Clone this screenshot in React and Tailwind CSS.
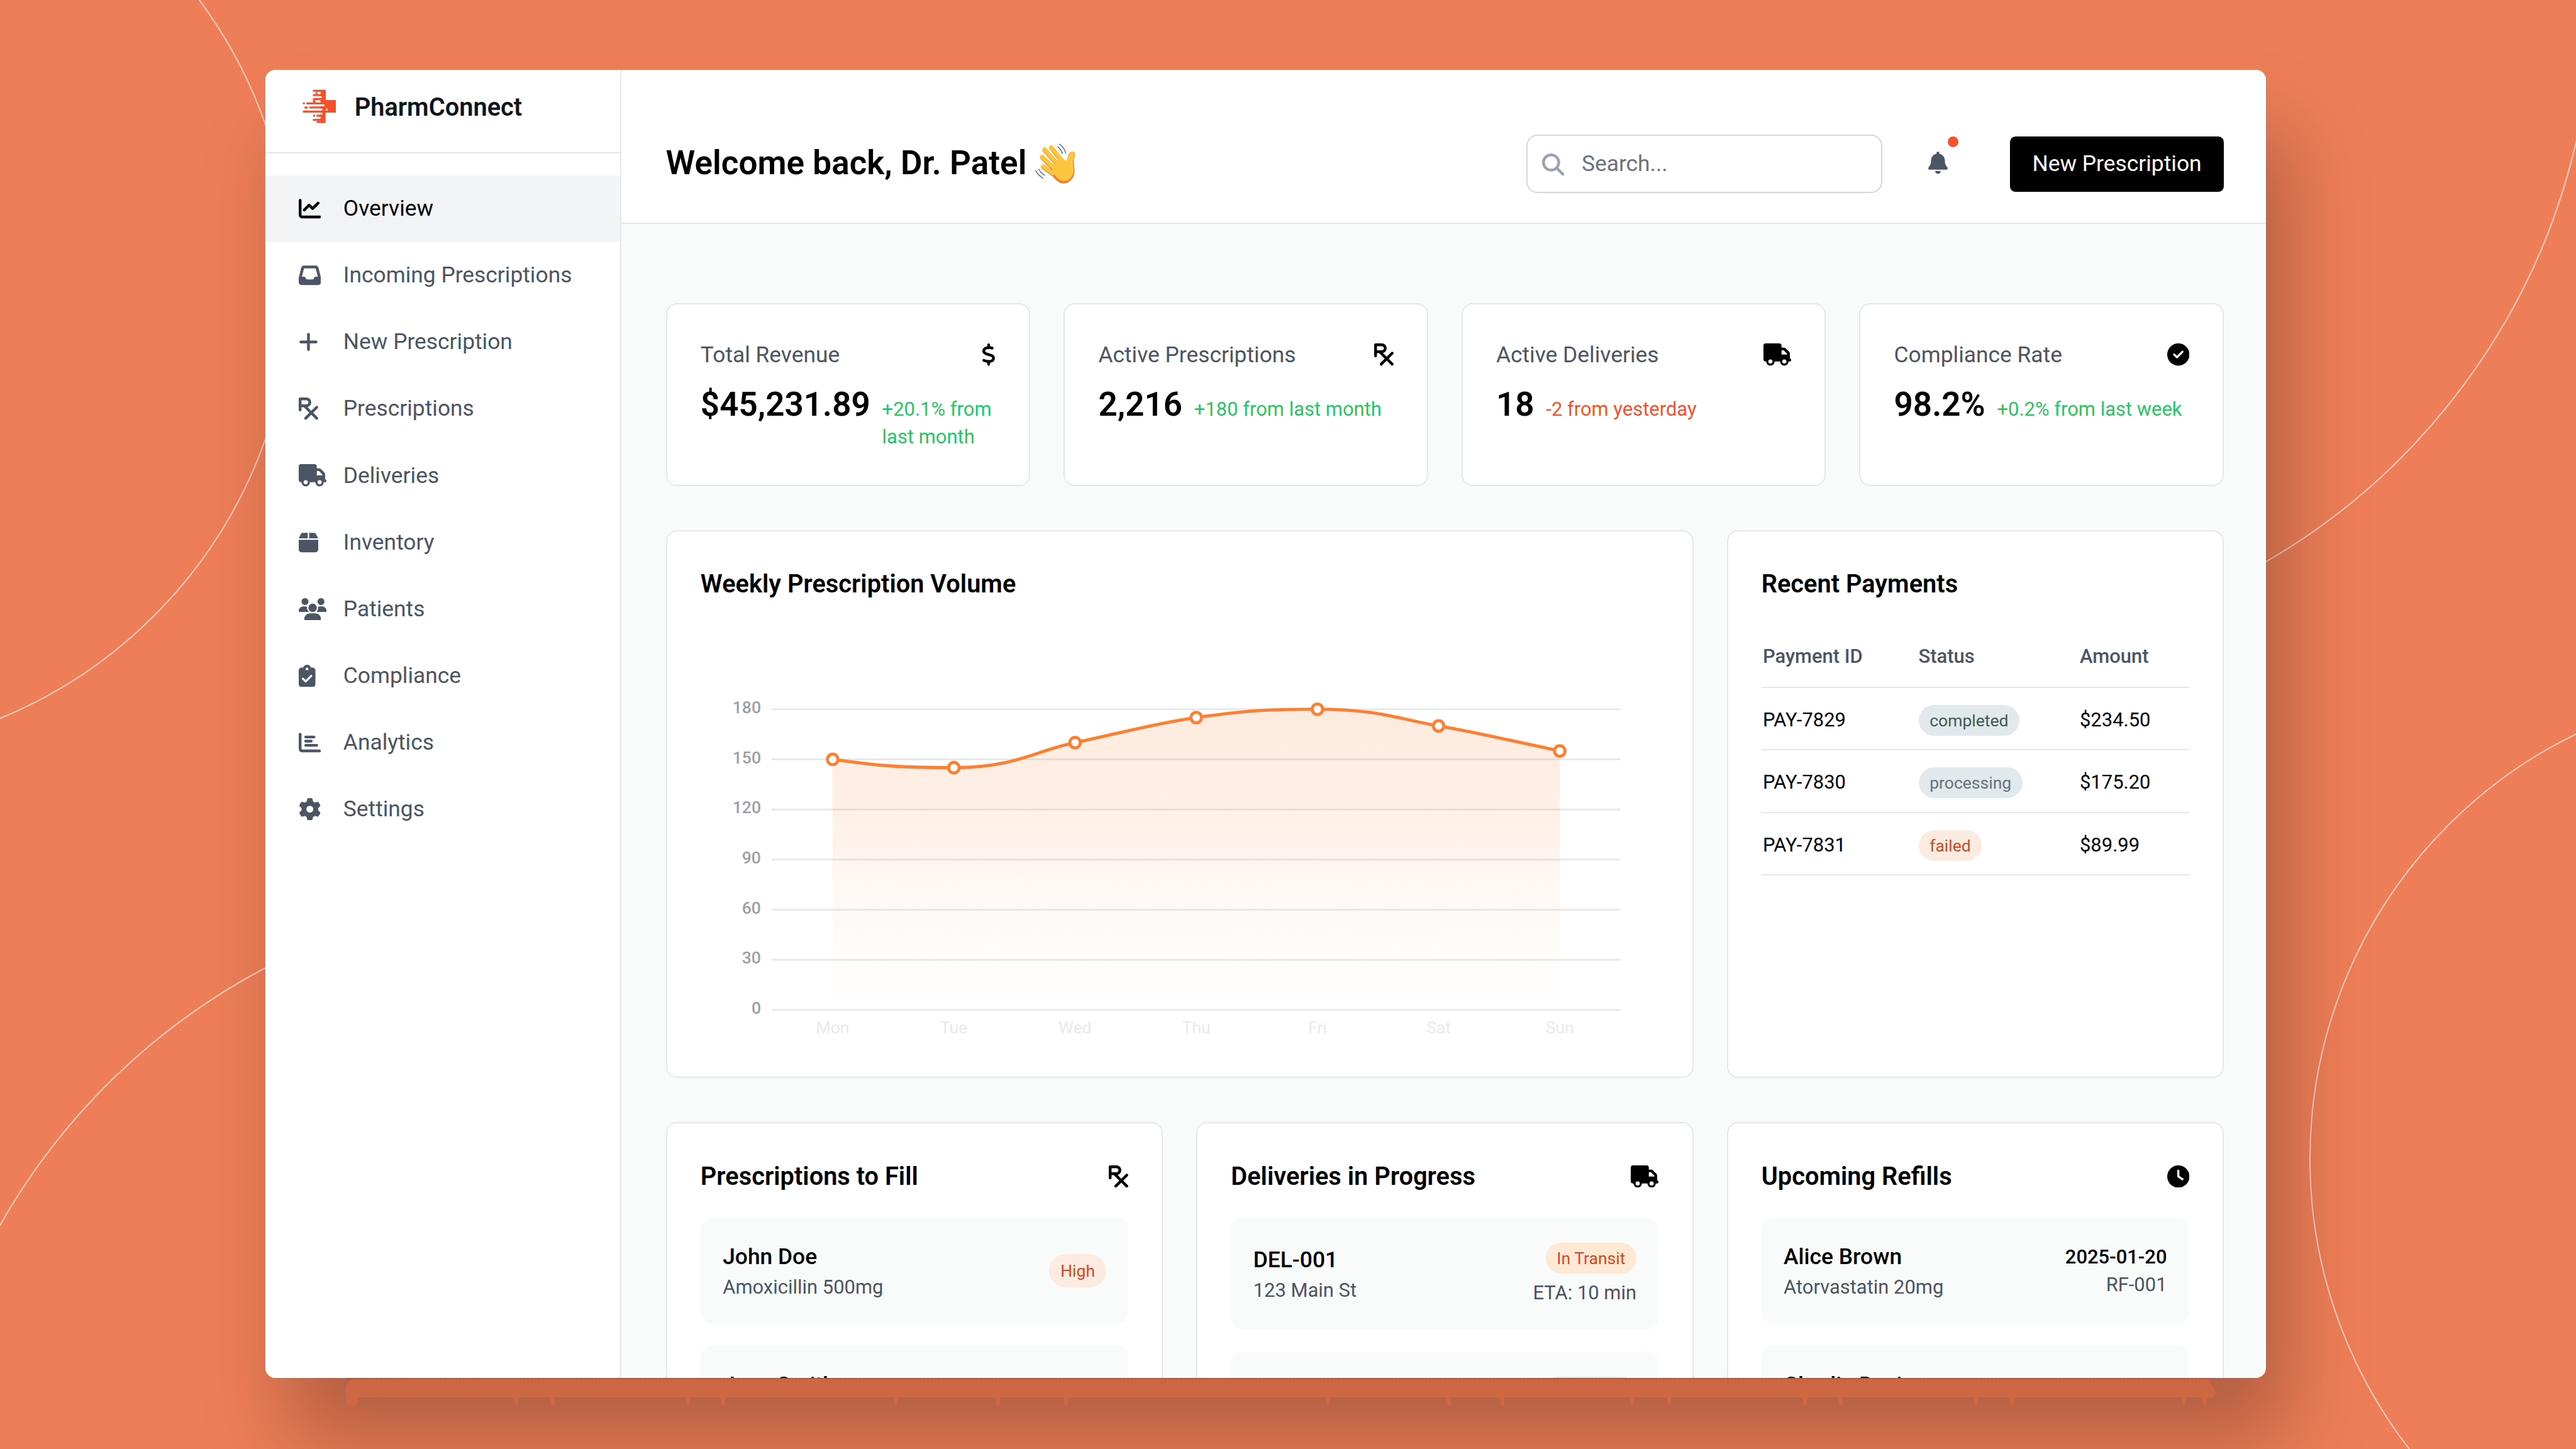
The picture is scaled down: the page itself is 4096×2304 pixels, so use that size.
import React from 'react';
import {
  FaBell,
  FaBox,
  FaChartBar,
  FaChartLine,
  FaCircleCheck,
  FaClipboardCheck,
  FaClock,
  FaDollarSign,
  FaGear,
  FaInbox,
  FaMagnifyingGlass,
  FaPlus,
  FaPrescription,
  FaTruck,
  FaUsers,
} from 'react-icons/fa6';

const navItems = [
  { label: 'Overview', icon: FaChartLine, size: 'w-4', active: true },
  { label: 'Incoming Prescriptions', icon: FaInbox, size: 'w-4' },
  { label: 'New Prescription', icon: FaPlus, size: 'w-3.5' },
  { label: 'Prescriptions', icon: FaPrescription, size: 'w-3.5' },
  { label: 'Deliveries', icon: FaTruck, size: 'w-5' },
  { label: 'Inventory', icon: FaBox, size: 'w-3.5' },
  { label: 'Patients', icon: FaUsers, size: 'w-5' },
  { label: 'Compliance', icon: FaClipboardCheck, size: 'w-3' },
  { label: 'Analytics', icon: FaChartBar, size: 'w-4' },
  { label: 'Settings', icon: FaGear, size: 'w-4' },
];

const stats = [
  { label: 'Total Revenue', value: '$45,231.89', change: '+20.1% from last month', icon: FaDollarSign, size: 'w-2.5', up: true },
  { label: 'Active Prescriptions', value: '2,216', change: '+180 from last month', icon: FaPrescription, size: 'w-3.5', up: true },
  { label: 'Active Deliveries', value: '18', change: '-2 from yesterday', icon: FaTruck, size: 'w-5', up: false },
  { label: 'Compliance Rate', value: '98.2%', change: '+0.2% from last week', icon: FaCircleCheck, size: 'w-4', up: true },
];

const payments = [
  { id: 'PAY-7829', status: 'completed', amount: '$234.50', badge: 'bg-[#e2e9ec] text-[#3f5a55]' },
  { id: 'PAY-7830', status: 'processing', amount: '$175.20', badge: 'bg-[#e2e9ec] text-[#66707d]' },
  { id: 'PAY-7831', status: 'failed', amount: '$89.99', badge: 'bg-[#fcebe0] text-[#cf4a22]' },
];

const toFill = [
  { name: 'John Doe', drug: 'Amoxicillin 500mg', priority: 'High' },
  { name: 'Jane Smith', drug: 'Lisinopril 10mg', priority: 'Medium' },
];

const deliveries = [
  { id: 'DEL-001', address: '123 Main St', status: 'In Transit', eta: '10 min', badge: 'bg-[#ffe9d5] text-[#cf4a22]' },
  { id: 'DEL-002', address: '456 Oak Ave', status: 'Preparing', eta: '25 min', badge: 'bg-[#e2e9ec] text-[#66707d]' },
];

const refills = [
  { name: 'Alice Brown', drug: 'Atorvastatin 20mg', date: '2025-01-20', id: 'RF-001' },
  { name: 'Charlie Davis', drug: 'Metformin 500mg', date: '2025-01-21', id: 'RF-002' },
];

const volume = [
  { day: 'Mon', value: 150 },
  { day: 'Tue', value: 145 },
  { day: 'Wed', value: 160 },
  { day: 'Thu', value: 175 },
  { day: 'Fri', value: 180 },
  { day: 'Sat', value: 170 },
  { day: 'Sun', value: 155 },
];

function Logo() {
  // horizontal strokes that make up the left half of the cross
  const rows = [
    [75, 27, 120], [75, 79, 80], [43, 89, 120], [26, 89, 27], [34, 109, 42],
    [57, 109, 120], [26, 129, 120], [76, 149, 77], [92, 149, 120],
    [75, 169, 120], [93, 179, 120], [75, 68, 120], [75, 48, 120], [88, 38, 89],
  ];
  return (
    <svg viewBox="20 20 165 167" className="h-[24.6px] w-[24.3px] shrink-0">
      <path fill="#f4512c" d="M108 22h26v50h49v62h-50v51h-25z" />
      {rows.map(([x1, y, x2]) => (
        <path key={`${x1}-${y}`} d={`M${x1} ${y}H${x2}`} stroke="#f4512c" strokeWidth="10" strokeLinecap="round" />
      ))}
      <g stroke="#fff" strokeWidth="9" strokeLinecap="round">
        <path d="M98 38h5M78 58h32M94 78h1M64 98h18M96 98h27M56 119h57M138 119h1M80 139h18M113 139h1M78 159h19" />
      </g>
    </svg>
  );
}

function WavingHand() {
  return (
    <svg viewBox="50 50 193 193" className="ml-[6.2px] h-[29px] w-[29px] shrink-0" role="img" aria-label="waving hand">
      <g fill="none" strokeLinecap="round" stroke="#f0812c" strokeWidth="22">
        <path d="M89 163l45 32M85 118l55 54M96 82l58 65M128 72l52 64" />
      </g>
      <path
        fill="#f5802a"
        d="M120 160l55-40 22 14c8-4 8-16 11-27 3-12 14-19 24-17 9 2 11 10 9 17-5 15-9 30-5 48 3 18 5 36-3 54-9 20-29 35-51 33-18-2-34-16-48-33z"
      />
      <g fill="none" strokeLinecap="round" stroke="#fbc63f" strokeWidth="20">
        <path d="M88 160l46 32M83 114l60 56M95 79l60 66M127 69l54 66" />
      </g>
      <path
        fill="#fbc63f"
        d="M124 160l50-42 22 17c9-3 10-15 13-26 3-12 13-19 22-18 8 1 10 9 8 16-5 15-11 30-7 48 3 17 4 32-4 48-9 19-26 30-45 27-17-3-32-18-45-36z"
      />
      <g fill="none" stroke="#f0812c" strokeWidth="2.5" strokeLinecap="round" opacity="0.75">
        <path d="M98 146l36 30M104 108l40 42M137 92l24 36" />
      </g>
      <g fill="none" stroke="#6d7580" strokeWidth="5" strokeLinecap="round">
        <path d="M167 54c14 9 23 23 29 41M158 66c11 8 18 18 22 32M53 180c7 15 18 27 34 36M68 174c6 12 14 21 27 28" />
      </g>
    </svg>
  );
}

function Sidebar() {
  return (
    <aside className="w-64 shrink-0 border-r border-[#e2e8ec] bg-white">
      <div className="flex h-[60px] items-start border-b border-[#e2e8ec] pl-[26.6px] pt-[13.9px]">
        <Logo />
        <span className="ml-[13.2px] mt-[-0.8px] text-lg font-semibold leading-7 text-[#111418]">PharmConnect</span>
      </div>
      <nav className="mt-[15.8px]">
        {navItems.map(({ label, icon: Icon, size, active }) => (
          <a
            key={label}
            className={`flex h-12 items-center px-6 ${active ? 'bg-[#f3f4f6] text-black' : 'text-[#4b5563]'}`}
          >
            <span className="mr-3 flex w-5 shrink-0">
              <Icon className={`h-4 ${size}`} />
            </span>
            {label}
          </a>
        ))}
      </nav>
    </aside>
  );
}

function Header() {
  return (
    <header className="flex h-[110.6px] shrink-0 items-start justify-between border-b border-[#e2e8ec] bg-white pl-8 pr-[31.6px] pt-[46.8px]">
      <h1 className="flex h-[41px] items-center text-2xl font-semibold text-black">
        Welcome back, Dr. Patel
        <WavingHand />
      </h1>
      <div className="flex items-center">
        <div className="relative">
          <div className="flex h-[42px] w-64 items-center rounded-lg border border-[#d1d9dd] pl-[39px] text-[#6b7280]">
            Search...
          </div>
          <FaMagnifyingGlass className="absolute left-[11.4px] top-[13.4px] size-4 text-[#9ca3af]" />
        </div>
        <button className="relative ml-[25px] flex h-10 items-center p-2 pb-[9.6px] text-[#4b5563]">
          <FaBell className="h-4 w-3.5" />
          <span className="absolute right-0 top-0 size-2 rounded-full bg-[#f4512c]" />
        </button>
        <button className="ml-[37px] h-10 rounded bg-black px-4 text-white">New Prescription</button>
      </div>
    </header>
  );
}

function StatCard({ label, value, change, icon: Icon, size, up }) {
  return (
    <div className="rounded-lg border border-[#e2e8ec] bg-white p-6">
      <div className="flex items-center justify-between">
        <span className="text-[#4b5563]">{label}</span>
        <Icon className={`h-4 text-black ${size}`} />
      </div>
      <div className="mt-2 flex items-baseline">
        <span className="text-2xl font-semibold text-black">{value}</span>
        <span className={`ml-[8.5px] text-sm ${up ? 'text-[#2ac466]' : 'text-[#f4512c]'}`}>{change}</span>
      </div>
    </div>
  );
}

function VolumeChart() {
  const x0 = 95;
  const step = 87.15;
  const yOf = (v) => 277.2 - v * 1.2015;
  const pts = volume.map((d, i) => [x0 + i * step, yOf(d.value)]);

  // smooth curve, flat at the local extremes
  const slopes = pts.slice(1).map((p, i) => (p[1] - pts[i][1]) / step);
  const tangents = pts.map((_, i) => {
    if (i === 0) return slopes[0] * 2;
    if (i === pts.length - 1) return slopes[i - 1];
    const a = slopes[i - 1];
    const b = slopes[i];
    return a * b <= 0 ? 0 : (a + b) / 2;
  });
  const handle = (i) => (tangents[i] === 0 ? step * 0.5 : step / 3);
  const line = pts.reduce((d, [x, y], i) => {
    if (i === 0) return `M${x} ${y}`;
    const [px, py] = pts[i - 1];
    const k1 = handle(i - 1);
    const k2 = handle(i);
    return `${d}C${px + k1} ${py + tangents[i - 1] * k1} ${x - k2} ${y - tangents[i] * k2} ${x} ${y}`;
  }, '');
  const area = `${line}V${yOf(0)}H${x0}Z`;

  return (
    <svg viewBox="0 0 688 300" className="mt-[14.7px] block h-[300px] w-[688px]">
      <defs>
        <linearGradient id="volumeFill" x1="0" y1="0" x2="0" y2="1">
          <stop offset="0" stopColor="#f98135" stopOpacity="0.16" />
          <stop offset="0.3" stopColor="#f98135" stopOpacity="0.13" />
          <stop offset="0.6" stopColor="#f98135" stopOpacity="0.055" />
          <stop offset="1" stopColor="#f98135" stopOpacity="0" />
        </linearGradient>
      </defs>
      {[180, 150, 120, 90, 60, 30, 0].map((v) => (
        <g key={v}>
          <path d={`M51 ${yOf(v)}H661.6`} stroke="#e5e8eb" strokeWidth="1.2" />
          <text x="43.4" y={yOf(v) + 2.8} textAnchor="end" fontSize="12" fontWeight="500" fill="#9b9fa8">
            {v}
          </text>
        </g>
      ))}
      <path d={area} fill="url(#volumeFill)" />
      <path d={line} fill="none" stroke="#f98135" strokeWidth="2.3" />
      {pts.map(([x, y], i) => (
        <g key={volume[i].day}>
          <circle cx={x} cy={y} r="3.8" fill="#fff" stroke="#f98135" strokeWidth="2.2" />
          <text x={x} y="294" textAnchor="middle" fontSize="12" fill="#e7eaed">
            {volume[i].day}
          </text>
        </g>
      ))}
    </svg>
  );
}

function Panel({ title, icon: Icon, iconSize, className = '', children }) {
  return (
    <section className={`rounded-lg border border-[#e2e8ec] bg-white p-6 ${className}`}>
      <div className="flex items-center justify-between">
        <h2 className="text-lg font-semibold leading-7 text-black">{title}</h2>
        {Icon && <Icon className={`h-4 text-black ${iconSize}`} />}
      </div>
      {children}
    </section>
  );
}

function PaymentsTable() {
  return (
    <div className="mt-[16.6px] text-sm">
      <div className="flex h-11 items-center border-b border-[#e2e8ec] pl-px font-medium text-[#4b5563]">
        <span className="w-[112px]">Payment ID</span>
        <span className="w-[116px]">Status</span>
        <span>Amount</span>
      </div>
      {payments.map((p) => (
        <div key={p.id} className="flex h-[45px] items-start border-b border-[#e2e8ec] pl-px pt-[13px] text-black">
          <span className="w-[112px]">{p.id}</span>
          <span className="w-[116px]">
            <span className={`rounded-full px-2 py-1 text-xs ${p.badge}`}>{p.status}</span>
          </span>
          <span>{p.amount}</span>
        </div>
      ))}
    </div>
  );
}

function Row({ title, subtitle, children }) {
  return (
    <div className="flex items-center justify-between rounded-lg bg-[#f9fbfa] p-4">
      <div>
        <p className="font-medium text-black">{title}</p>
        <p className="text-sm text-[#4b5563]">{subtitle}</p>
      </div>
      {children}
    </div>
  );
}

function Backdrop() {
  return (
    <svg viewBox="0 0 4096 2304" className="absolute inset-0 h-full w-full" fill="none">
      <g stroke="#fff" strokeOpacity="0.6" strokeWidth="2">
        <circle cx="-286" cy="448" r="751" />
        <path d="M3600 895A1045 1045 0 0 0 4097 222" />
        <circle cx="4424" cy="1843" r="751" />
        <path d="M424 1538A1045 1045 0 0 0 -1 1950" />
      </g>
    </svg>
  );
}

// ragged ledge under the bottom edge of the window
function Ledge() {
  const drips = [
    821, 879, 1094, 1150, 1424, 1587, 1695, 2111, 2304, 2389, 2595, 2654, 2870, 2927, 3142, 3199, 3472, 3506,
  ];
  return (
    <svg viewBox="0 2191 4096 113" className="absolute bottom-0 left-0 h-[113px] w-full">
      <path fill="#b95636" d="M549 2191H3512v3H549z" />
      <path fill="#ce6744" d="M562 2193H3512l14 26h-6v3H569c1 10-3 16-10 16s-9-8-9-18c-3-12-1-24 12-27z" />
      {drips.map((x) => (
        <path key={x} fill="#ce6744" d={`M${x - 4} 2219h8l-2 16h-4z`} />
      ))}
      <path d="M593 2196.500H3505" stroke="#4f5a63" strokeWidth="1" strokeDasharray="1 5" />
    </svg>
  );
}

export default function App() {
  return (
    <div className="relative h-[2304px] w-[4096px] overflow-hidden bg-[#ee7e58] pl-[422px] pt-[111px] font-['Roboto',sans-serif]">
      <Backdrop />
      <div className="relative h-[2080px] w-[3181px] rounded-[16px] shadow-[34px_100px_130px_rgba(0,0,0,0.25)]">
        <div className="h-full w-full overflow-hidden rounded-[16px] bg-[#f9fbfa]">
          <div className="flex h-[942px] w-[1440px] [zoom:2.211]">
            <Sidebar />
            <div className="flex min-w-0 flex-1 flex-col">
              <Header />
              <main className="pl-8 pr-[31.6px] pt-[57.4px]">
                <div className="grid h-[130px] grid-cols-4 gap-6">
                  {stats.map((s) => (
                    <StatCard key={s.label} {...s} />
                  ))}
                </div>

                <div className="mt-[33.1px] grid h-[393.8px] grid-cols-3 gap-6">
                  <Panel title="Weekly Prescription Volume" className="col-span-2">
                    <VolumeChart />
                  </Panel>
                  <Panel title="Recent Payments">
                    <PaymentsTable />
                  </Panel>
                </div>

                <div className="mt-8 grid grid-cols-3 gap-6">
                  <Panel title="Prescriptions to Fill" icon={FaPrescription} iconSize="w-3.5">
                    <div className="mt-4 space-y-4">
                      {toFill.map((p) => (
                        <Row key={p.name} title={p.name} subtitle={p.drug}>
                          <span className="rounded-full bg-[#fcebe0] px-2 py-1 text-xs text-[#cf4a22]">{p.priority}</span>
                        </Row>
                      ))}
                    </div>
                  </Panel>
                  <Panel title="Deliveries in Progress" icon={FaTruck} iconSize="w-5">
                    <div className="mt-4 space-y-4">
                      {deliveries.map((d) => (
                        <Row key={d.id} title={d.id} subtitle={d.address}>
                          <div className="text-right">
                            <span className={`rounded-full px-2 py-1 text-xs ${d.badge}`}>{d.status}</span>
                            <p className="mt-1 text-sm text-[#4b5563]">ETA: {d.eta}</p>
                          </div>
                        </Row>
                      ))}
                    </div>
                  </Panel>
                  <Panel title="Upcoming Refills" icon={FaClock} iconSize="w-4">
                    <div className="mt-4 space-y-4">
                      {refills.map((r) => (
                        <Row key={r.id} title={r.name} subtitle={r.drug}>
                          <div className="pt-[0.6px] text-right text-sm">
                            <p className="font-medium text-black">{r.date}</p>
                            <p className="text-[#4b5563]">{r.id}</p>
                          </div>
                        </Row>
                      ))}
                    </div>
                  </Panel>
                </div>
              </main>
            </div>
          </div>
        </div>
      </div>
      <Ledge />
    </div>
  );
}
